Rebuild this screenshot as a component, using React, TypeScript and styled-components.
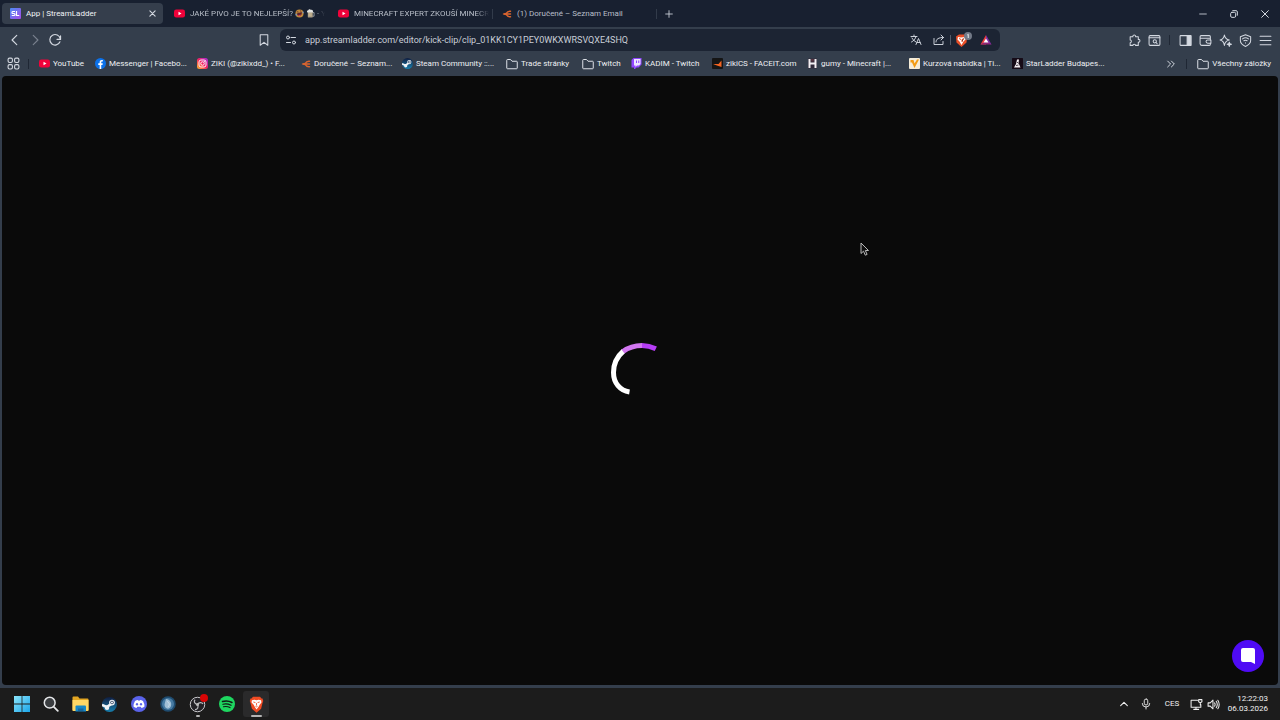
import React from "react";
import styled, { createGlobalStyle, css } from "styled-components";

const GlobalStyle = createGlobalStyle`
  *, *::before, *::after { box-sizing: border-box; }
  html, body { margin: 0; padding: 0; background: #1c1c1c; }
  body, button, input { font-family: Roboto, "Noto Sans", sans-serif; }
  svg { flex: none; }
`;

const Desktop = styled.div`
  display: flex;
  flex-direction: column;
  min-height: 100vh;
  overflow: hidden;
  background: #1c1c1c;
  color: #e3e7ed;
  font-size: 8px;
  line-height: 12px;
`;

const Browser = styled.div`
  display: flex;
  flex-direction: column;
  flex: 1;
  background: #343e4c;
`;

const buttonReset = css`
  appearance: none;
  border: 0;
  padding: 0;
  margin: 0;
  background: none;
  color: inherit;
  font-size: inherit;
  line-height: inherit;
`;

const TabStrip = styled.div`
  display: flex;
  align-items: center;
  height: 27px;
  padding-left: 2px;
  background: #182030;
`;

const Tab = styled.div<{ $active?: boolean }>`
  display: flex;
  align-items: center;
  flex: 0 1 161px;
  min-width: 0;
  height: 21px;
  padding: 0 ${(p) => (p.$active ? 6 : 2)}px 0 8px;
  border-radius: 4px;
  background: ${(p) => (p.$active ? "#353e4c" : "transparent")};
  color: ${(p) => (p.$active ? "#f1f3f6" : "#b9bfc9")};
`;

const TabSelect = styled.button<{ $fade?: boolean }>`
  ${buttonReset}
  display: flex;
  align-items: center;
  gap: 5px;
  flex: 1;
  min-width: 0;
  overflow: hidden;
  white-space: nowrap;
  ${(p) =>
    p.$fade &&
    css`
      mask-image: linear-gradient(to right, #000 calc(100% - 12px), transparent);
    `}
`;

const TabTitle = styled.span`
  display: flex;
  align-items: center;
  gap: 2px;
`;

const TabDivider = styled.span<{ $hidden?: boolean }>`
  width: 1px;
  height: 10px;
  margin: 0 1px;
  background: ${(p) => (p.$hidden ? "transparent" : "#323b4a")};
`;

const IconButton = styled.button<{ $w?: number; $dim?: boolean }>`
  ${buttonReset}
  display: flex;
  align-items: center;
  justify-content: center;
  flex: none;
  width: ${(p) => p.$w ?? 20}px;
  height: 20px;
  color: ${(p) => (p.$dim ? "#79818e" : "#d3d8e0")};
`;

const Spacer = styled.div`
  flex: 1;
`;

const Toolbar = styled.div`
  display: grid;
  grid-template-columns: 1fr minmax(0, 720px) 1fr;
  align-items: center;
  height: 26px;
`;

const ToolGroup = styled.div<{ $end?: boolean }>`
  display: flex;
  align-items: center;
  justify-content: ${(p) => (p.$end ? "flex-end" : "flex-start")};
  padding: ${(p) => (p.$end ? "0 5px 0 0" : "0 6px 0 5px")};
`;

const AddressBar = styled.div`
  display: flex;
  align-items: center;
  height: 22px;
  padding: 0 4px 0 1px;
  border-radius: 6px;
  background: #1c2433;
`;

const UrlInput = styled.input`
  flex: 1;
  min-width: 0;
  height: 20px;
  margin-left: 4px;
  padding: 0;
  border: 0;
  outline: 0;
  background: none;
  color: #c9ced7;
  font-size: 9px;
`;

const Divider = styled.span<{ $m?: number; $light?: boolean }>`
  flex: none;
  width: 1px;
  height: 10px;
  margin: 0 ${(p) => p.$m ?? 5}px;
  background: ${(p) => (p.$light ? "#535c6a" : "#1f2734")};
`;

const BookmarksBar = styled.nav`
  display: flex;
  align-items: center;
  height: 23px;
  padding: 0 9px 2px 3px;
  white-space: nowrap;
`;

const BookmarkList = styled.div`
  display: flex;
  flex: 1;
  min-width: 0;
  padding-left: 5px;
  overflow: hidden;
`;

const Bookmark = styled.a<{ $w?: number }>`
  display: flex;
  align-items: center;
  gap: 3px;
  flex: none;
  width: ${(p) => (p.$w ? `${p.$w}px` : "auto")};
  color: #eef0f3;
  text-decoration: none;
`;

const Page = styled.main`
  position: relative;
  display: flex;
  align-items: center;
  justify-content: center;
  flex: 1;
  margin: 0 2px 3px;
  padding-bottom: 22px;
  border-radius: 4px;
  background: #0a0a0a;
`;

const ChatButton = styled.button`
  ${buttonReset}
  position: absolute;
  right: 14px;
  bottom: 13px;
  display: flex;
  align-items: center;
  justify-content: center;
  width: 32px;
  height: 32px;
  border-radius: 50%;
  background: #4f0bf5;
`;

const Cursor = styled.svg`
  position: absolute;
  left: 858px;
  top: 166px;
`;

const Taskbar = styled.footer`
  display: flex;
  align-items: center;
  justify-content: space-between;
  height: 32px;
  padding: 0 12px 0 7px;
`;

const AppList = styled.div`
  display: grid;
  grid-template-columns: repeat(9, 1fr);
  width: 264px;
`;

const AppButton = styled.button<{ $active?: boolean; $mark?: number }>`
  ${buttonReset}
  position: relative;
  display: flex;
  align-items: center;
  justify-content: center;
  justify-self: center;
  width: 26px;
  height: 26px;
  border-radius: 3px;
  background: ${(p) => (p.$active ? "#2a2a2b" : "transparent")};
  &::after {
    content: "";
    position: absolute;
    bottom: 0;
    width: ${(p) => p.$mark ?? 0}px;
    height: 2px;
    border-radius: 1px;
    background: #b4b4b4;
  }
`;

const Tray = styled.div`
  display: flex;
  align-items: center;
  color: #f0f0f0;
`;

const TrayButton = styled.button<{ $w: number }>`
  ${buttonReset}
  display: flex;
  align-items: center;
  justify-content: center;
  width: ${(p) => p.$w}px;
  height: 24px;
`;

const Clock = styled.time`
  display: flex;
  flex-direction: column;
  align-items: flex-end;
  width: 48px;
  line-height: 10px;
`;

type LineProps = { size?: number; w?: number; children: React.ReactNode };
const Line = ({ size = 12, w = 1.6, children }: LineProps) => (
  <svg width={size} height={size} viewBox="0 0 24 24" fill="none" stroke="currentColor" strokeWidth={w} strokeLinecap="round" strokeLinejoin="round" aria-hidden="true">
    {children}
  </svg>
);

const YouTube = () => (
  <svg width="11" height="11" viewBox="0 0 22 22" aria-hidden="true">
    <rect x="0" y="3" width="22" height="16" rx="4.5" fill="#f0023a" />
    <path d="M9 7.5v7l6-3.5z" fill="#fff" />
  </svg>
);

const StreamLadder = () => (
  <svg width="11" height="11" viewBox="0 0 22 22" aria-hidden="true">
    <defs>
      <linearGradient id="sl" x1="0" y1="0" x2="1" y2="1">
        <stop offset="0" stopColor="#4c8df5" />
        <stop offset="1" stopColor="#a54be8" />
      </linearGradient>
    </defs>
    <rect width="22" height="22" rx="2" fill="url(#sl)" />
    <path d="M10 7H5.500Q4 7 4 9t1.500 2H8q2 0 2 2t-2 2H3.500M13 6v9h5.500" fill="none" stroke="#fff" strokeWidth="2.400" />
  </svg>
);

const Seznam = () => (
  <svg width="10" height="10" viewBox="0 0 20 20" aria-hidden="true">
    <path d="M17 4.500C13 4 10 6 8 9.500M4 10H17M8 10.500C10 14 13 16 17 15.500" fill="none" stroke="#d9642f" strokeWidth="3" strokeLinecap="round" />
    <path d="M1 10 9 7v6z" fill="#d9642f" />
  </svg>
);

const Laugh = () => (
  <svg width="9" height="9" viewBox="0 0 20 20" aria-hidden="true">
    <circle cx="10" cy="10" r="9" fill="#c08a3c" />
    <path d="M4 10 15 6.500c1 5-1.500 8-4.500 8.500S5 14 4 10z" fill="#59222b" />
    <path d="m4 6 4 1M11 4l3 1" stroke="#59222b" strokeWidth="1.800" />
    <path d="M1 11c3-1 4 1 3 3s-3 1-3-3zM16 7c3-3 4 0 3 3z" fill="#6b92cc" />
    <path d="m7 14 6-2-1 3-3 1z" fill="#d83c58" />
  </svg>
);

const Beer = () => (
  <svg width="9" height="9" viewBox="0 0 20 20" aria-hidden="true">
    <path d="M14 8h4v8h-4" fill="none" stroke="#a9b0b5" strokeWidth="2" />
    <rect x="4" y="6" width="11" height="13" rx="2" fill="#a99c83" />
    <path d="M7 9v7M11 9v7" stroke="#d5c29a" strokeWidth="2" />
    <path d="M3 8c-2-3 0-5 2-5 1-3 5-3 6-1 3-1 6 2 4 6z" fill="#e0e1df" />
  </svg>
);

const Facebook = () => (
  <svg width="11" height="11" viewBox="0 0 22 22" aria-hidden="true">
    <circle cx="11" cy="11" r="11" fill="#0b71ea" />
    <path d="M9.300 22v-8H6.500v-3.300h2.800V8.500C9.300 5.500 11 4 13.500 4h2.200v3h-1.500c-1.300 0-1.700.8-1.700 1.800v1.900h3l-.5 3.300h-2.500v8z" fill="#fff" />
  </svg>
);

const Instagram = () => (
  <svg width="11" height="11" viewBox="0 0 22 22" aria-hidden="true">
    <defs>
      <linearGradient id="ig" x1="0" y1="1" x2="1" y2="0">
        <stop offset="0" stopColor="#ffc22c" />
        <stop offset=".5" stopColor="#f32163" />
        <stop offset="1" stopColor="#9c2ee0" />
      </linearGradient>
    </defs>
    <rect width="22" height="22" rx="5" fill="url(#ig)" />
    <g fill="none" stroke="#fff" strokeWidth="1.800">
      <rect x="4" y="4" width="14" height="14" rx="4" />
      <circle cx="11" cy="11" r="3.500" />
    </g>
    <circle cx="15" cy="7" r="1" fill="#fff" />
  </svg>
);

const Steam = ({ size = 11 }: { size?: number }) => (
  <svg width={size} height={size} viewBox="0 0 24 24" aria-hidden="true">
    <defs>
      <linearGradient id="steam" x1="0" y1="0" x2="0" y2="1">
        <stop offset="0" stopColor="#101d40" />
        <stop offset="1" stopColor="#177fae" />
      </linearGradient>
    </defs>
    <circle cx="12" cy="12" r="12" fill="url(#steam)" />
    <path d="M0 12.500 7.500 16 15 11" fill="none" stroke="#eef3f7" strokeWidth="4" />
    <circle cx="8" cy="17" r="3.600" fill="#eef3f7" />
    <circle cx="16" cy="8.800" r="4.600" fill="#eef3f7" />
    <circle cx="16" cy="8.800" r="2.700" fill="#20395a" />
    <circle cx="16" cy="8.800" r="1.700" fill="#eef3f7" />
  </svg>
);

const Folder = () => (
  <svg width="12" height="12" viewBox="0 0 24 24" fill="none" stroke="#dde1e7" strokeWidth="2" strokeLinejoin="round" aria-hidden="true">
    <path d="M1.500 4.500Q1.500 3 3 3h6l3 3.500h9q1.500 0 1.500 1.500v12q0 1.500-1.500 1.500H3Q1.500 21.500 1.500 20z" />
  </svg>
);

const Twitch = () => (
  <svg width="11" height="11" viewBox="0 0 22 22" aria-hidden="true">
    <path d="M5 0h16v13l-6 6h-4l-3 3H6v-3H1V4z" fill="#9146ff" />
    <path d="M6 2h13v10l-3 3h-4l-3 3v-3H6z" fill="#eee5ff" />
    <path d="M11 5v5M15.500 5v5" stroke="#9146ff" strokeWidth="2" />
  </svg>
);

const Faceit = () => (
  <svg width="11" height="11" viewBox="0 0 22 22" aria-hidden="true">
    <rect width="22" height="22" rx="2" fill="#151515" />
    <path d="M19 5v13c-5-2-10-3.500-16-5.500V12h10z" fill="#f46422" />
  </svg>
);

const Gumy = () => (
  <svg width="11" height="11" viewBox="0 0 22 22" aria-hidden="true">
    <rect x="2" y="1" width="18" height="20" fill="#302b3a" />
    <path d="M3 2h4v18H3zM15 2h4v18h-4zM6 9h10v4H6z" fill="#f3f0f3" />
    <path d="M8 2h6v5H8z" fill="#53333f" />
  </svg>
);

const Tipsport = () => (
  <svg width="11" height="11" viewBox="0 0 22 22" aria-hidden="true">
    <rect width="22" height="22" rx="2" fill="#f5ecd8" />
    <path d="M3 4h6l2 7 5-8h4L11 20 6 9H3z" fill="#f39b13" />
  </svg>
);

const StarLadder = () => (
  <svg width="11" height="11" viewBox="0 0 22 22" aria-hidden="true">
    <rect width="22" height="22" rx="1" fill="#160b17" />
    <path d="M10 3h4l-1 7 4 9H4l4-7z" fill="#f4eef2" />
    <path d="m8 15 5-1M10 8l3 3" stroke="#160b17" strokeWidth="1.500" />
  </svg>
);

const BraveLion = ({ size }: { size: number }) => (
  <svg width={size} height={size} viewBox="0 0 24 24" aria-hidden="true">
    <path d="M7 1h10l2 2.500 1.500 0L21.500 7l-1 3-2 8-6.500 5.500L5.500 18l-2-8-1-3 1-3.500H5z" fill="#f04b23" />
    <path d="m5.500 6 3.500-.8 3 .7 3-.7 3.500.8.5 3-2.500 3.500-1.500 2.500L12 19l-2.500-4L8 12.500 5 9z" fill="#fff" />
    <path d="m7.500 8.500 3 .8M16.500 8.500l-3 .8M12 10v3.500M10.500 14.500l1.500.8 1.500-.8" fill="none" stroke="#f04b23" strokeWidth="1.200" />
  </svg>
);

const ShieldsIcon = () => (
  <svg width="18" height="16" viewBox="0 0 36 32" aria-hidden="true">
    <path d="M8 5h11l5 4-1 12-10 9-10-9L2 9z" fill="#e94f28" />
    <path d="m6 10 6 1 8-1 1 5-4 4-4 7-4-7-4-4z" fill="#fff" />
    <path d="m8 13 4 2M18 13l-4 2v5" stroke="#e94f28" strokeWidth="2" />
    <circle cx="26" cy="8" r="8" fill="#727987" />
    <path d="m24.500 6 2-1.500V12" fill="none" stroke="#e2e5e9" strokeWidth="2" />
  </svg>
);

const BatIcon = () => (
  <svg width="12" height="12" viewBox="0 0 24 24" aria-hidden="true">
    <path d="M12 2 1 21h11V13z" fill="#e93c3b" />
    <path d="m12 2 11 19-11-3z" fill="#7d2ca4" />
    <path d="M1 21h22l-8-5H9z" fill="#8f2678" />
    <path d="m12 9 5 8H7z" fill="#fff" />
  </svg>
);

const Windows = () => (
  <svg width="16" height="16" viewBox="0 0 16 16" aria-hidden="true">
    <defs>
      <linearGradient id="win" x1="0" y1="0" x2="1" y2="1">
        <stop offset="0" stopColor="#8ce5fb" />
        <stop offset="1" stopColor="#1ba6ea" />
      </linearGradient>
    </defs>
    <path d="M0 0h7.600v7.600H0zM8.400 0H16v7.600H8.400zM0 8.400h7.600V16H0zM8.400 8.400H16V16H8.400z" fill="url(#win)" />
  </svg>
);

const Search = () => (
  <svg width="16" height="16" viewBox="0 0 16 16" fill="none" aria-hidden="true">
    <circle cx="6.700" cy="6.700" r="5.400" fill="#3a3d40" stroke="#e4e6e8" strokeWidth="1.500" />
    <path d="m10.800 10.800 4 4" stroke="#e4e6e8" strokeWidth="1.800" strokeLinecap="round" />
  </svg>
);

const Explorer = () => (
  <svg width="17" height="16" viewBox="0 0 34 32" aria-hidden="true">
    <path d="M1 3q0-2 2-2h9l3 4h16q2 0 2 2v22H1z" fill="#e3a622" />
    <path d="M1 8h32v20q0 2-2 2H3q-2 0-2-2z" fill="#ffd866" />
    <path d="M7 31V21q0-2 2-2h17q2 0 2 2v10z" fill="#1788c7" />
    <path d="M12 25h11v5H12z" fill="#16679e" />
  </svg>
);

const Discord = () => (
  <svg width="16" height="16" viewBox="0 0 32 32" aria-hidden="true">
    <circle cx="16" cy="16" r="16" fill="#5a63ea" />
    <path d="M8 10q3-2 6-2l1 1.500h2L18 8q3 0 6 2 3.500 6 3 11-3 2.500-6 3l-1.500-2.500h-7L11 24q-3-.5-6-3-.5-5 3-11z" fill="#fff" />
    <ellipse cx="12" cy="16.500" rx="2.200" ry="2.600" fill="#5a63ea" />
    <ellipse cx="20" cy="16.500" rx="2.200" ry="2.600" fill="#5a63ea" />
  </svg>
);

const BlueOrb = () => (
  <svg width="16" height="16" viewBox="0 0 32 32" aria-hidden="true">
    <circle cx="16" cy="16" r="15.500" fill="#1f4c70" />
    <circle cx="16" cy="16" r="12" fill="#477ba3" />
    <path d="M12 6c8 1 12 7 10 14-1 4-5 6-8 5-5-2-6-8-4-12z" fill="#a0bfd6" />
    <path d="M14 11c5 2 6 7 2 11" fill="none" stroke="#d0dfe9" strokeWidth="2" />
  </svg>
);

const Obs = () => (
  <svg width="20" height="20" viewBox="0 0 40 40" fill="none" aria-hidden="true">
    <circle cx="19" cy="21" r="14.500" fill="#222126" stroke="#c9c9cc" strokeWidth="2" />
    <g stroke="#b9b9bd" strokeWidth="2.500">
      <path d="M19 21c-6-1-8-6-5-10M19 21c3-5 9-5 11-1M19 21c3 5 0 10-5 10" />
    </g>
    <circle cx="19" cy="21" r="3" fill="#bbb" />
    <circle cx="32" cy="8" r="8" fill="#d90505" />
  </svg>
);

const Spotify = () => (
  <svg width="16" height="16" viewBox="0 0 32 32" fill="none" aria-hidden="true">
    <circle cx="16" cy="16" r="16" fill="#1ed760" />
    <g stroke="#111a14" strokeLinecap="round">
      <path d="M7 11q10-3 19 2" strokeWidth="3" />
      <path d="M8 16.500q8-2.300 16 2" strokeWidth="2.600" />
      <path d="M9 21.500q7-1.800 13 1.700" strokeWidth="2.200" />
    </g>
  </svg>
);

const Spinner = () => (
  <svg width="80" height="80" viewBox="0 0 80 80" fill="none" strokeWidth="5" role="img" aria-label="Loading">
    <path d="M23.500 21C16.500 27 13.500 35 13.500 42.500 13.500 53 20 60.500 29.500 62" stroke="#fff" />
    <path d="M42 15.500Q31 15.500 23 21.500" stroke="#d277f1" />
    <path d="M55.800 18.800Q49 15.500 42 15.500" stroke="#b63df6" />
  </svg>
);

const bookmarks = [
  { label: "YouTube", icon: <YouTube />, w: 56 },
  { label: "Messenger | Facebo...", icon: <Facebook />, w: 102 },
  { label: "ZIKI (@zikixdd_) • F...", icon: <Instagram />, w: 104 },
  { label: "Doručené – Seznam...", icon: <Seznam />, w: 101 },
  { label: "Steam Community ::...", icon: <Steam />, w: 104 },
  { label: "Trade stránky", icon: <Folder />, w: 76 },
  { label: "Twitch", icon: <Folder />, w: 49 },
  { label: "KADIM - Twitch", icon: <Twitch />, w: 81 },
  { label: "zikiCS - FACEIT.com", icon: <Faceit />, w: 95 },
  { label: "gumy - Minecraft |...", icon: <Gumy />, w: 102 },
  { label: "Kurzová nabídka | Ti...", icon: <Tipsport />, w: 103 },
  { label: "StarLadder Budapes...", icon: <StarLadder />, w: 103 },
];

const apps = [
  { name: "Start", icon: <Windows /> },
  { name: "Search", icon: <Search /> },
  { name: "File Explorer", icon: <Explorer /> },
  { name: "Steam", icon: <Steam size={15} /> },
  { name: "Discord", icon: <Discord /> },
  { name: "Launcher", icon: <BlueOrb /> },
  { name: "OBS Studio", icon: <Obs />, mark: 4 },
  { name: "Spotify", icon: <Spotify /> },
  { name: "Brave", icon: <BraveLion size={17} />, mark: 11, active: true },
];

export default function App() {
  return (
    <Desktop>
      <GlobalStyle />
      <Browser>
        <TabStrip>
          <Tab $active>
            <TabSelect><StreamLadder />App | StreamLadder</TabSelect>
            <IconButton $w={9} aria-label="Close tab"><Line size={9} w={3}><path d="m5 5 14 14M19 5 5 19" /></Line></IconButton>
          </Tab>
          <TabDivider $hidden />
          <Tab>
            <TabSelect $fade><YouTube /><TabTitle>JAKÉ PIVO JE TO NEJLEPŠÍ? <Laugh /><Beer /> - Y</TabTitle></TabSelect>
          </Tab>
          <TabDivider $hidden />
          <Tab>
            <TabSelect $fade><YouTube />MINECRAFT EXPERT ZKOUŠÍ MINECR</TabSelect>
          </Tab>
          <TabDivider />
          <Tab>
            <TabSelect><Seznam />(1) Doručené – Seznam Email</TabSelect>
          </Tab>
          <TabDivider />
          <IconButton $w={22} aria-label="New tab"><Line size={10} w={2}><path d="M12 4v16M4 12h16" /></Line></IconButton>
          <Spacer />
          <IconButton $w={31} aria-label="Minimize"><Line size={10} w={2}><path d="M4 12h16" /></Line></IconButton>
          <IconButton $w={31} aria-label="Restore"><Line size={10} w={2.400}><rect x="4" y="8" width="12" height="12" rx="3" /><path d="M9 4h8q3 0 3 3v8" /></Line></IconButton>
          <IconButton $w={31} aria-label="Close"><Line size={10} w={2.400}><path d="m4 4 16 16M20 4 4 20" /></Line></IconButton>
        </TabStrip>

        <Toolbar>
          <ToolGroup>
            <IconButton aria-label="Back"><Line size={14} w={2}><path d="m15 4-8 8 8 8" /></Line></IconButton>
            <IconButton $dim aria-label="Forward"><Line size={14} w={2}><path d="m9 4 8 8-8 8" /></Line></IconButton>
            <IconButton aria-label="Reload"><Line size={14} w={2}><path d="M20.500 15a9 9 0 1 1 .5-5M21.500 5v6h-6" /></Line></IconButton>
            <Spacer />
            <IconButton aria-label="Bookmark this page"><Line size={14} w={1.800}><path d="M5.500 3h13v18L12 16l-6.500 5z" /></Line></IconButton>
          </ToolGroup>
          <AddressBar>
            <IconButton aria-label="Site information">
              <Line size={12} w={2}><circle cx="6" cy="7" r="3" /><path d="M12 7h9M3 17h8" /><circle cx="18" cy="17" r="3" /></Line>
            </IconButton>
            <UrlInput aria-label="Address" defaultValue="app.streamladder.com/editor/kick-clip/clip_01KK1CY1PEY0WKXWRSVQXE4SHQ" />
            <IconButton $w={23} aria-label="Translate">
              <Line size={12} w={1.900}><path d="M2 5h12M8 2v3M12 5c-1 5-5 9-9 11M4 8c2 4 5 6 8 8M12 21l5-12 5 12M14 17h6" /></Line>
            </IconButton>
            <IconButton $w={23} aria-label="Share">
              <Line size={12} w={1.900}><path d="M2 9v12h18v-6M6 16c0-6 5-9 15-9M16 2l5 5-5 5" /></Line>
            </IconButton>
            <Divider $m={0} $light />
            <IconButton $w={25} aria-label="Shields"><ShieldsIcon /></IconButton>
            <IconButton aria-label="Rewards"><BatIcon /></IconButton>
          </AddressBar>
          <ToolGroup $end>
            <IconButton aria-label="Extensions">
              <Line size={13} w={1.900}><path d="M4 5h5c-1-4 6-4 5 0h5v5c4-1 4 6 0 5v6h-5c0-3-5-3-5 0H4v-5c3 0 3-5 0-5z" /></Line>
            </IconButton>
            <IconButton aria-label="Search tabs">
              <Line size={13} w={1.900}><rect x="2" y="3" width="20" height="18" rx="2" /><path d="M2 7h20M15 16l2 2" /><circle cx="12.500" cy="13.500" r="3" /></Line>
            </IconButton>
            <Divider />
            <IconButton aria-label="Sidebar">
              <Line size={13} w={1.900}><rect x="2" y="3" width="20" height="18" rx="1" /><path d="M15 3h7v18h-7z" fill="currentColor" /></Line>
            </IconButton>
            <IconButton aria-label="Wallet">
              <Line size={13} w={1.900}><path d="M21 8V5q0-2-2-2H4Q2 3 2 5v13q0 3 3 3h14q2 0 2-2v-2M2 6q0 2 2 2h17v3" /><path d="M22 11h-6q-3 0-3 3t3 3h6z" /></Line>
            </IconButton>
            <IconButton aria-label="Leo">
              <Line size={13} w={1.900}><path d="M10 2c1 5 3 8 9 9-5 1-8 3-9 10-1-6-3-9-8-10 5-1 7-4 8-9z" /><path d="m19 15 1 3 3 1-3 1-1 3-1-3-3-1 3-1z" fill="currentColor" /></Line>
            </IconButton>
            <IconButton aria-label="VPN">
              <Line size={13} w={1.900}><path d="M12 1.500 21.500 5v7c0 5-4 8.500-9.500 11C6.500 20.500 2.500 17 2.500 12V5z" /><path d="M6.500 9q5.500-4 11 0M9 12.500q3-2 6 0M12 16v.5" /></Line>
            </IconButton>
            <IconButton aria-label="Menu"><Line size={13} w={1.900}><path d="M2 4h20M2 12h20M2 20h20" /></Line></IconButton>
          </ToolGroup>
        </Toolbar>

        <BookmarksBar aria-label="Bookmarks">
          <IconButton aria-label="Apps">
            <Line size={13} w={2}><rect x="2" y="2" width="8" height="8" rx="2.500" /><rect x="14" y="2" width="8" height="8" rx="2.500" /><rect x="2" y="14" width="8" height="8" rx="2.500" /><rect x="14" y="14" width="8" height="8" rx="2.500" /></Line>
          </IconButton>
          <Divider />
          <BookmarkList>
            {bookmarks.map((b) => (
              <Bookmark key={b.label} href="#" $w={b.w}>{b.icon}{b.label}</Bookmark>
            ))}
          </BookmarkList>
          <IconButton $w={10} aria-label="More bookmarks"><Line size={10} w={2.400}><path d="m4 5 7 7-7 7M13 5l7 7-7 7" /></Line></IconButton>
          <Divider $m={10} />
          <Bookmark href="#"><Folder />Všechny záložky</Bookmark>
        </BookmarksBar>

        <Page>
          <Spinner />
          <Cursor width="10" height="15" viewBox="0 0 10 15" aria-hidden="true">
            <path d="M1 1v10.500l2.500-2.300 1.800 4 1.800-.8-1.800-3.900H8.500z" fill="#111" stroke="#b9b9b9" strokeWidth="1" />
          </Cursor>
          <ChatButton aria-label="Open chat">
            <svg width="14" height="16" viewBox="0 0 14 16" aria-hidden="true">
              <path d="M2 0h10q2 0 2 2v14l-4-2H2q-2 0-2-2V2q0-2 2-2z" fill="#fff" />
            </svg>
          </ChatButton>
        </Page>
      </Browser>

      <Taskbar>
        <AppList>
          {apps.map((a) => (
            <AppButton key={a.name} aria-label={a.name} $active={a.active} $mark={a.mark}>{a.icon}</AppButton>
          ))}
        </AppList>
        <Tray>
          <TrayButton $w={20} aria-label="Show hidden icons"><Line size={10} w={2.600}><path d="m4 16 8-8 8 8" /></Line></TrayButton>
          <TrayButton $w={24} aria-label="Microphone">
            <Line size={12} w={1.800}><rect x="8.500" y="2" width="7" height="12" rx="3.500" /><path d="M4.500 11q0 7 7.500 7t7.500-7M12 18v4" /></Line>
          </TrayButton>
          <TrayButton $w={28} aria-label="Keyboard language">CES</TrayButton>
          <TrayButton $w={20} aria-label="Network">
            <Line size={13} w={1.900}><path d="M14 4H2v13h18v-5M7 21h9M11 17v4M16 3h6v4l-3 2-3-2zM19 9v4" /></Line>
          </TrayButton>
          <TrayButton $w={14} aria-label="Volume">
            <Line size={13} w={1.900}><path d="M2 9h4l5-5v16l-5-5H2zM14 9q2 3 0 6M17 6q4 6 0 12M20 4q5 8 0 16" /></Line>
          </TrayButton>
          <Clock><span>12:22:03</span><span>06.03.2026</span></Clock>
        </Tray>
      </Taskbar>
    </Desktop>
  );
}
